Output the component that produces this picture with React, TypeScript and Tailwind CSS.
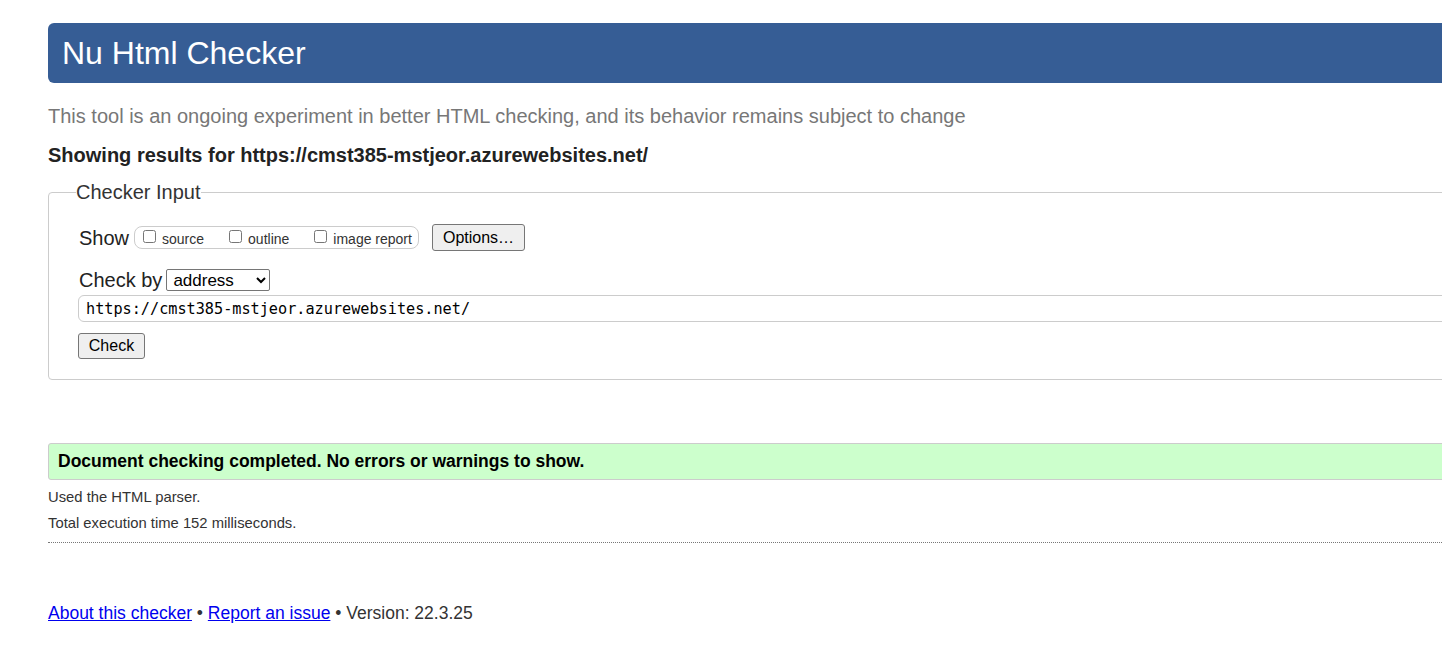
export default function App() {
  return (
    <div className="w-[1442px] h-[665px] overflow-hidden bg-white font-['Liberation_Sans',Arial,sans-serif] text-[#222]">
      <div className="ml-[48px] w-[1500px] pt-[23px]">
        <h1 className="flex h-[60px] items-center rounded-l-md bg-[#365d95] pl-[14px] text-[32px] font-normal text-white">
          Nu Html Checker
        </h1>
        <p className="mt-[21px] text-[20px] leading-[24px] text-[#777]">
          This tool is an ongoing experiment in better HTML checking, and its behavior remains subject to change
        </p>
        <p className="mt-[15px] text-[20px] font-bold leading-[24px] text-[#222]">
          Showing results for https://cmst385-mstjeor.azurewebsites.net/
        </p>

        <fieldset className="mt-[13px] rounded-[4px] border border-[#ccc] pb-[20px] pl-[29px]">
          <legend className="-ml-[2px] text-[20px] leading-[24px] text-[#333]">Checker Input</legend>

          <div className="mt-[20px] flex h-[27px] items-center">
            <span className="ml-[1px] text-[20px] leading-[24px] text-[#222]">Show</span>
            <div className="ml-[5px] flex h-[23px] w-[285px] items-center rounded-lg border border-[#ccc] pl-[8px] text-[14px] text-[#333]">
              <label className="flex items-center">
                <input type="checkbox" className="-mt-[3px] h-[13px] w-[13px]" />
                <span className="ml-[6px] mt-[3px]">source</span>
              </label>
              <label className="ml-[25px] flex items-center">
                <input type="checkbox" className="-mt-[3px] h-[13px] w-[13px]" />
                <span className="ml-[6px] mt-[3px]">outline</span>
              </label>
              <label className="ml-[25px] flex items-center">
                <input type="checkbox" className="-mt-[3px] h-[13px] w-[13px]" />
                <span className="ml-[6px] mt-[3px]">image report</span>
              </label>
            </div>
            <button className="ml-[13px] h-[27px] w-[93px] rounded-[3px] border border-[#767676] bg-[#efefef] text-[16px] text-black">
              Options…
            </button>
          </div>

          <div className="mt-[17px] flex h-[24px] items-center">
            <span className="ml-[1px] text-[20px] leading-[24px] text-[#222]">Check by</span>
            <select
              defaultValue="address"
              className="ml-[4px] h-[22px] w-[104px] rounded-[2px] border border-[#767676] bg-white pl-[2px] text-[17px] leading-[20px] text-black"
            >
              <option value="address">address</option>
              <option value="file">file upload</option>
              <option value="text">text input</option>
            </select>
          </div>

          <input
            type="text"
            readOnly
            value="https://cmst385-mstjeor.azurewebsites.net/"
            className="mt-[3px] block h-[27px] w-[1420px] rounded-md border border-[#ccc] pl-[7px] font-['DejaVu_Sans_Mono',monospace] text-[15.2px] text-black"
          />

          <button className="mt-[11px] block h-[26px] w-[67px] rounded-[3px] border border-[#767676] bg-[#efefef] text-[16px] text-black">
            Check
          </button>
        </fieldset>

        <div className="mt-[63px] flex h-[37px] items-center rounded-l-[3px] border border-[#ccc] bg-[#ccffcc] pl-[9px] text-[17.5px] font-bold text-black">
          Document checking completed. No errors or warnings to show.
        </div>

        <p className="mt-[7px] text-[14.8px] leading-[20px] text-[#333]">Used the HTML parser.</p>
        <p className="mt-[6px] border-b border-dotted border-[#777] pb-[9px] text-[14.8px] leading-[20px] text-[#333]">
          Total execution time 152 milliseconds.
        </p>

        <p className="mt-[59px] text-[17.5px] leading-[22px] text-[#333]">
          <a href="#" className="text-[#0000ee] underline">About this checker</a>
          {" • "}
          <a href="#" className="text-[#0000ee] underline">Report an issue</a>
          {" • Version: 22.3.25"}
        </p>
      </div>
    </div>
  );
}
